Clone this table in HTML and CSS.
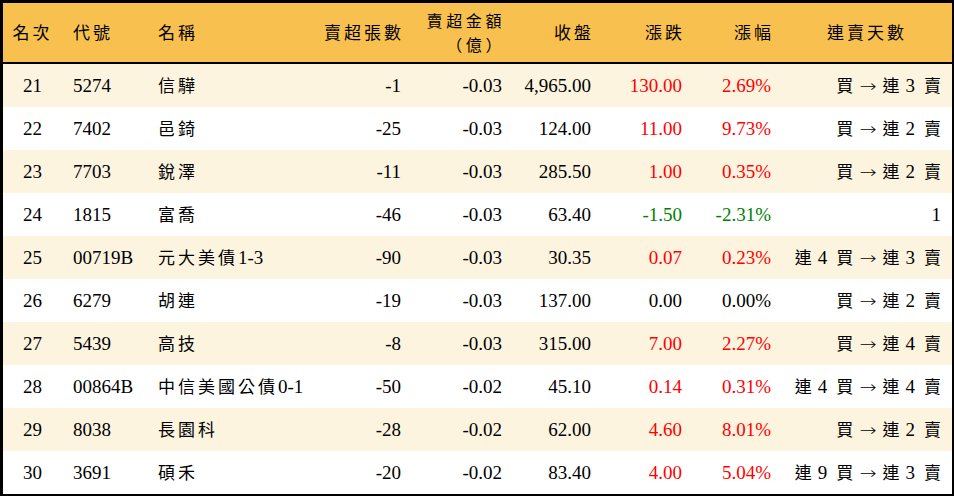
FILE: index.html
```html
<!DOCTYPE html>
<html lang="zh-Hant">
<head>
<meta charset="utf-8">
<title>賣超排行</title>
<link rel="stylesheet" href="styles.css">
</head>
<body>
<div class="frame">
<table class="rank">
<colgroup>
<col class="c1"><col class="c2"><col class="c3"><col class="c4"><col class="c5"><col class="c6"><col class="c7"><col class="c8"><col class="c9">
</colgroup>
<thead>
<tr>
<th class="center"><span class="zh">名次</span></th>
<th class="left"><span class="zh">代號</span></th>
<th class="left"><span class="zh">名稱</span></th>
<th class="right"><span class="zh">賣超張數</span></th>
<th class="right"><span class="zh line">賣超金額</span><span class="zh line">（億）</span></th>
<th class="right"><span class="zh">收盤</span></th>
<th class="right"><span class="zh">漲跌</span></th>
<th class="right"><span class="zh">漲幅</span></th>
<th class="center"><span class="zh">連賣天數</span></th>
</tr>
</thead>
<tbody>
<tr class="alt"><td class="center">21</td><td class="left">5274</td><td class="left"><span class="zh">信驊</span></td><td class="right">-1</td><td class="right">-0.03</td><td class="right">4,965.00</td><td class="right up">130.00</td><td class="right up">2.69%</td><td class="right"><span class="zh">買</span><span class="arr">→</span><span class="zh">連</span><span class="n">3</span><span class="zh end">賣</span></td></tr>
<tr><td class="center">22</td><td class="left">7402</td><td class="left"><span class="zh">邑錡</span></td><td class="right">-25</td><td class="right">-0.03</td><td class="right">124.00</td><td class="right up">11.00</td><td class="right up">9.73%</td><td class="right"><span class="zh">買</span><span class="arr">→</span><span class="zh">連</span><span class="n">2</span><span class="zh end">賣</span></td></tr>
<tr class="alt"><td class="center">23</td><td class="left">7703</td><td class="left"><span class="zh">銳澤</span></td><td class="right">-11</td><td class="right">-0.03</td><td class="right">285.50</td><td class="right up">1.00</td><td class="right up">0.35%</td><td class="right"><span class="zh">買</span><span class="arr">→</span><span class="zh">連</span><span class="n">2</span><span class="zh end">賣</span></td></tr>
<tr><td class="center">24</td><td class="left">1815</td><td class="left"><span class="zh">富喬</span></td><td class="right">-46</td><td class="right">-0.03</td><td class="right">63.40</td><td class="right down">-1.50</td><td class="right down">-2.31%</td><td class="right">1</td></tr>
<tr class="alt"><td class="center">25</td><td class="left">00719B</td><td class="left"><span class="zh">元大美債</span>1-3</td><td class="right">-90</td><td class="right">-0.03</td><td class="right">30.35</td><td class="right up">0.07</td><td class="right up">0.23%</td><td class="right"><span class="zh">連</span><span class="n">4</span><span class="zh">買</span><span class="arr">→</span><span class="zh">連</span><span class="n">3</span><span class="zh end">賣</span></td></tr>
<tr><td class="center">26</td><td class="left">6279</td><td class="left"><span class="zh">胡連</span></td><td class="right">-19</td><td class="right">-0.03</td><td class="right">137.00</td><td class="right">0.00</td><td class="right">0.00%</td><td class="right"><span class="zh">買</span><span class="arr">→</span><span class="zh">連</span><span class="n">2</span><span class="zh end">賣</span></td></tr>
<tr class="alt"><td class="center">27</td><td class="left">5439</td><td class="left"><span class="zh">高技</span></td><td class="right">-8</td><td class="right">-0.03</td><td class="right">315.00</td><td class="right up">7.00</td><td class="right up">2.27%</td><td class="right"><span class="zh">買</span><span class="arr">→</span><span class="zh">連</span><span class="n">4</span><span class="zh end">賣</span></td></tr>
<tr><td class="center">28</td><td class="left">00864B</td><td class="left"><span class="zh">中信美國公債</span>0-1</td><td class="right">-50</td><td class="right">-0.02</td><td class="right">45.10</td><td class="right up">0.14</td><td class="right up">0.31%</td><td class="right"><span class="zh">連</span><span class="n">4</span><span class="zh">買</span><span class="arr">→</span><span class="zh">連</span><span class="n">4</span><span class="zh end">賣</span></td></tr>
<tr class="alt"><td class="center">29</td><td class="left">8038</td><td class="left"><span class="zh">長園科</span></td><td class="right">-28</td><td class="right">-0.02</td><td class="right">62.00</td><td class="right up">4.60</td><td class="right up">8.01%</td><td class="right"><span class="zh">買</span><span class="arr">→</span><span class="zh">連</span><span class="n">2</span><span class="zh end">賣</span></td></tr>
<tr><td class="center">30</td><td class="left">3691</td><td class="left"><span class="zh">碩禾</span></td><td class="right">-20</td><td class="right">-0.02</td><td class="right">83.40</td><td class="right up">4.00</td><td class="right up">5.04%</td><td class="right"><span class="zh">連</span><span class="n">9</span><span class="zh">買</span><span class="arr">→</span><span class="zh">連</span><span class="n">3</span><span class="zh end">賣</span></td></tr>
</tbody>
</table>
</div>
</body>
</html>
```
FILE: styles.css
```css
html, body {
  margin: 0;
  padding: 0;
  background: #ffffff;
}

.frame {
  width: 949px;
  border-style: solid;
  border-color: #000000;
  border-width: 3px 2px 2px 3px;
}

.rank {
  width: 949px;
  table-layout: fixed;
  border-collapse: collapse;
  border-spacing: 0;
  font-family: "Liberation Serif", "Noto Sans CJK TC", serif;
  font-size: 19px;
  color: #000000;
}

.c1 { width: 59px; }
.c2 { width: 85px; }
.c3 { width: 168px; }
.c4 { width: 97px; }
.c5 { width: 101px; }
.c6 { width: 89px; }
.c7 { width: 91px; }
.c8 { width: 89px; }
.c9 { width: 170px; }

.rank th {
  background: #f8c14f;
  height: 59px;
  padding: 0 8px;
  font-weight: normal;
  line-height: 22px;
  white-space: nowrap;
  border-bottom: 2px solid #000000;
}

.rank th.left {
  padding-left: 11px;
}

.rank th .line {
  display: block;
  font-size: 16px;
  letter-spacing: 3.6px;
  line-height: 23.5px;
}

.rank td {
  height: 43px;
  padding: 0 11px;
  line-height: 20px;
  white-space: nowrap;
}

.rank tr.alt td {
  background: #fdf4df;
}

.left { text-align: left; }
.right { text-align: right; }
.center { text-align: center; }

.zh {
  font-family: "Noto Sans CJK TC", sans-serif;
  font-size: 17px;
  letter-spacing: 3px;
}

.rank td .zh.end {
  letter-spacing: 0;
}

.n {
  margin: 0 9px 0 3px;
}

.arr {
  display: inline-block;
  font-family: "DejaVu Sans", sans-serif;
  font-size: 17px;
  font-weight: 300;
  transform: scaleX(1.2);
  margin: 0 7px 0 5px;
}

.up { color: #ff0000; }
.down { color: #008000; }
```
